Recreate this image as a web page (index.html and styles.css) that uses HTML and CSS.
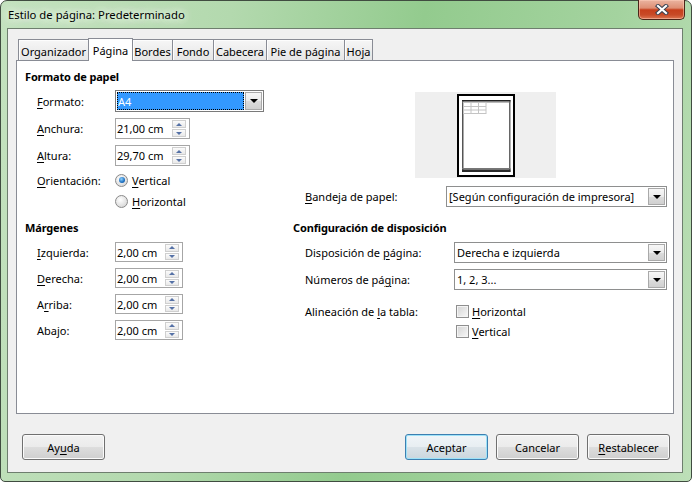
FILE: index.html
```html
<!DOCTYPE html>
<html lang="es">
<head>
<meta charset="utf-8">
<title>Estilo de página: Predeterminado</title>
<link rel="stylesheet" href="styles.css">
</head>
<body>
<div class="window">
  <div class="titlebar">
    <span class="title">Estilo de página: Predeterminado</span>
    <div class="close">
      <svg width="14" height="11" viewBox="0 0 14 11">
        <path d="M3 2 L11 9 M11 2 L3 9" stroke="#3b4150" stroke-width="4.2" stroke-linecap="square" fill="none"/>
        <path d="M3 2 L11 9 M11 2 L3 9" stroke="#ffffff" stroke-width="2.2" stroke-linecap="square" fill="none"/>
      </svg>
    </div>
  </div>
  <div class="client">
    <div class="tabs">
      <div class="tab w-org">Organizador</div>
      <div class="tab active w-pag">Página</div>
      <div class="tab w-bor">Bordes</div>
      <div class="tab w-fon">Fondo</div>
      <div class="tab w-cab">Cabecera</div>
      <div class="tab w-pie">Pie de página</div>
      <div class="tab w-hoj">Hoja</div>
    </div>
    <div class="panel">
      <div class="col-left">
        <div class="heading">Formato de papel</div>
        <div class="row r-formato">
          <span class="lbl"><u>F</u>ormato:</span>
          <div class="select sel-a4">
            <span class="val hl">A4</span>
            <span class="arrow"><i class="tri"></i></span>
          </div>
        </div>
        <div class="row r-field">
          <span class="lbl"><u>A</u>nchura:</span>
          <div class="spin wide"><span class="val">21,00 cm</span><span class="btns"><span class="up"></span><span class="dn"></span></span></div>
        </div>
        <div class="row r-field">
          <span class="lbl"><u>A</u>ltura:</span>
          <div class="spin wide"><span class="val">29,70 cm</span><span class="btns"><span class="up"></span><span class="dn"></span></span></div>
        </div>
        <div class="row r-orient">
          <span class="lbl"><u>O</u>rientación:</span>
          <span class="radio on"></span><span><u>V</u>ertical</span>
        </div>
        <div class="row r-horiz">
          <span class="radio"></span><span><u>H</u>orizontal</span>
        </div>
        <div class="heading h-marg">Márgenes</div>
        <div class="row r-marg">
          <span class="lbl"><u>I</u>zquierda:</span>
          <div class="spin"><span class="val">2,00 cm</span><span class="btns"><span class="up"></span><span class="dn"></span></span></div>
        </div>
        <div class="row r-marg">
          <span class="lbl"><u>D</u>erecha:</span>
          <div class="spin"><span class="val">2,00 cm</span><span class="btns"><span class="up"></span><span class="dn"></span></span></div>
        </div>
        <div class="row r-marg">
          <span class="lbl">A<u>r</u>riba:</span>
          <div class="spin"><span class="val">2,00 cm</span><span class="btns"><span class="up"></span><span class="dn"></span></span></div>
        </div>
        <div class="row r-marg">
          <span class="lbl">Aba<u>j</u>o:</span>
          <div class="spin"><span class="val">2,00 cm</span><span class="btns"><span class="up"></span><span class="dn"></span></span></div>
        </div>
      </div>
      <div class="col-right">
        <div class="preview">
          <svg width="141" height="86" viewBox="0 0 141 86">
            <rect x="0" y="0" width="141" height="86" fill="#efefef"/>
            <rect x="43" y="3" width="56" height="81" fill="#ffffff" stroke="#000" stroke-width="2"/>
            <rect x="47" y="8" width="1.5" height="72" fill="#555"/>
            <rect x="94" y="8" width="1.5" height="72" fill="#666"/>
            <rect x="47" y="8" width="48.5" height="1.5" fill="#222"/>
            <rect x="47" y="9.5" width="48.5" height="1" fill="#777"/>
            <rect x="47" y="76" width="48.5" height="1.5" fill="#777"/>
            <rect x="47" y="77.5" width="48.5" height="2.5" fill="#2a2a2a"/>
            <g stroke="#c4c4c4" stroke-width="1" fill="none">
              <rect x="48.5" y="10.5" width="22.5" height="11"/>
              <line x1="56" y1="10.5" x2="56" y2="21.5"/>
              <line x1="63.5" y1="10.5" x2="63.5" y2="21.5"/>
              <line x1="48.5" y1="14.5" x2="71" y2="14.5"/>
              <line x1="48.5" y1="18" x2="71" y2="18"/>
            </g>
          </svg>
        </div>
        <div class="row r-bandeja">
          <span class="lbl lbl-b"><u>B</u>andeja de papel:</span>
          <div class="select sel-b"><span class="val">[Según configuración de impresora]</span><span class="arrow"><i class="tri"></i></span></div>
        </div>
        <div class="heading h-conf">Configuración de disposición</div>
        <div class="row r-disp">
          <span class="lbl lbl-c">Disposición de <u>p</u>ágina:</span>
          <div class="select sel-c"><span class="val">Derecha e izquierda</span><span class="arrow"><i class="tri"></i></span></div>
        </div>
        <div class="row r-disp">
          <span class="lbl lbl-c">Números de pá<u>g</u>ina:</span>
          <div class="select sel-c"><span class="val">1, 2, 3...</span><span class="arrow"><i class="tri"></i></span></div>
        </div>
        <div class="row r-alin">
          <span class="lbl lbl-d">Alineación de <u>l</u>a tabla:</span>
          <span class="check"></span><span><u>H</u>orizontal</span>
        </div>
        <div class="row r-vert">
          <span class="check"></span><span><u>V</u>ertical</span>
        </div>
      </div>
    </div>
    <div class="buttons">
      <div class="btn">Ay<u>u</u>da</div>
      <div class="btn-group">
        <div class="btn default">Aceptar</div>
        <div class="btn">Cancelar</div>
        <div class="btn"><u>R</u>establecer</div>
      </div>
    </div>
  </div>
</div>
</body>
</html>
```
FILE: styles.css
```css
* { box-sizing: border-box; }
html, body { margin: 0; padding: 0; }
body {
  width: 692px;
  height: 482px;
  overflow: hidden;
  font-family: "Noto Sans", "Liberation Sans", sans-serif;
  font-size: 11px;
  color: #000;
  background: #fff;
}
u { text-decoration: underline; text-underline-offset: 2px; }

.window {
  width: 692px;
  height: 482px;
  border: 1px solid #404c40;
  border-radius: 7px 7px 5px 5px;
  background: linear-gradient(100deg, #c4e2bf 0%, #b3d9ae 30%, #93cb8e 55%, #a4d39f 80%, #bddfb8 100%);
  padding: 0 8px 8px 6px;
  display: flex;
  flex-direction: column;
}

.titlebar {
  height: 27px;
  flex: none;
  display: flex;
  align-items: flex-start;
}
.title {
  padding: 6px 0 0 1px;
  font-size: 11.3px;
  text-shadow: 0 0 6px #eef8ec, 0 0 10px #eef8ec, 0 0 14px #e6f4e3;
}
.close {
  margin-left: auto;
  margin-right: -2px;
  margin-top: -1px;
  width: 47px;
  height: 20px;
  border: 1px solid #4a2418;
  border-top: none;
  border-radius: 0 0 5px 5px;
  background: linear-gradient(#eab4a0 0%, #de8f74 42%, #c63f1c 52%, #c84a27 78%, #dc7652 100%);
  box-shadow: inset 0 0 0 1px rgba(255, 210, 190, 0.5);
  display: flex;
  align-items: center;
  justify-content: center;
}

.client {
  flex: 1;
  background: #f0f0f0;
  border: 1px solid #6e7e6e;
  padding: 0 8px;
  display: flex;
  flex-direction: column;
}

.tabs {
  display: flex;
  align-items: flex-end;
  height: 22px;
  margin-top: 9px;
  padding-left: 2px;
  position: relative;
  z-index: 1;
}
.tab {
  height: 21px;
  border: 1px solid #898c95;
  border-bottom: none;
  margin-left: -1px;
  background: linear-gradient(#f6f6f6, #e6e6e6);
  box-shadow: inset 1px 1px 0 #fdfdfd;
  display: flex;
  align-items: center;
  justify-content: center;
  padding-top: 3px;
  white-space: nowrap;
}
.tab:first-child { margin-left: 0; }
.tab.active {
  height: 23px;
  margin-bottom: -1px;
  background: #fff;
  box-shadow: none;
  padding-top: 1px;
  position: relative;
  z-index: 2;
}
.w-org { width: 71px; }
.w-pag { width: 45px; }
.w-bor { width: 41px; }
.w-fon { width: 42px; }
.w-cab { width: 54px; }
.w-pie { width: 79px; }
.w-hoj { width: 29px; }

.panel {
  height: 354px;
  flex: none;
  background: #fff;
  border: 1px solid #898c95;
  display: flex;
  padding: 8px 0 0 8px;
}
.col-left { width: 268px; display: flex; flex-direction: column; }
.col-right { width: 374px; display: flex; flex-direction: column; }

.heading {
  height: 16px;
  line-height: 16px;
  font-weight: bold;
  letter-spacing: -0.15px;
}
.row { display: flex; align-items: center; white-space: nowrap; }
.lbl { width: 78px; margin-left: 12px; flex: none; }

.r-formato { margin-top: 5px; height: 22px; }
.r-field { margin-top: 6px; height: 21px; }
.r-orient { margin-top: 4px; height: 20px; }
.r-horiz { margin-top: 1px; height: 20px; padding-left: 90px; }
.h-marg { margin-top: 9px; }
.r-marg { margin-top: 6px; height: 20px; }

.preview { margin-top: 23px; margin-left: 122px; height: 86px; }
.preview svg { display: block; }
.r-bandeja { margin-top: 8px; height: 21px; }
.lbl-b { width: 141px; }
.h-conf { margin-top: 13px; }
.r-disp { margin-top: 6px; height: 21px; }
.lbl-c { width: 149px; }
.r-alin { margin-top: 11px; height: 20px; }
.lbl-d { width: 151px; }
.r-vert { height: 20px; padding-left: 163px; }

.select {
  display: flex;
  height: 100%;
  border: 1px solid #8e8f8f;
  background: #fff;
}
.select .val {
  flex: 1;
  padding-left: 2px;
  display: flex;
  align-items: center;
  overflow: hidden;
}
.select .arrow {
  width: 17px;
  margin: 1px;
  border: 1px solid #a9a9a9;
  background: linear-gradient(#f7f7f7 0%, #ebebeb 50%, #dcdcdc 51%, #d0d0d0 100%);
  display: flex;
  align-items: center;
  justify-content: center;
}
.tri {
  width: 0;
  height: 0;
  border-left: 4px solid transparent;
  border-right: 4px solid transparent;
  border-top: 4px solid #000;
}
.sel-a4 { width: 149px; border-color: #7a7a7a; }
.sel-a4 .val.hl {
  margin: 1px 0 1px 1px;
  background: #3399ff;
  color: #fff;
  outline: 1px dotted #000;
  outline-offset: -1px;
  padding-left: 1px;
}
.sel-b { width: 221px; }
.sel-c { width: 213px; }

.spin {
  display: flex;
  width: 68px;
  height: 100%;
  border: 1px solid #a6a6a6;
  background: #fff;
}
.spin.wide { width: 75px; }
.spin .val {
  flex: 1;
  padding-left: 1px;
  display: flex;
  align-items: center;
}
.spin .btns {
  width: 14px;
  margin: 1px 3px 1px 0;
  display: flex;
  flex-direction: column;
  gap: 1px;
}
.spin .btns span {
  flex: 1;
  border: 1px solid #cfcfcf;
  background: linear-gradient(#fbfbfb, #e9e9e9);
  display: flex;
  align-items: center;
  justify-content: center;
}
.spin .btns .up::after {
  content: "";
  border-left: 3px solid transparent;
  border-right: 3px solid transparent;
  border-bottom: 3px solid #5571a6;
}
.spin .btns .dn::after {
  content: "";
  border-left: 3px solid transparent;
  border-right: 3px solid transparent;
  border-top: 3px solid #5571a6;
}

.radio {
  width: 13px;
  height: 13px;
  border-radius: 50%;
  border: 1px solid #8a8a8a;
  background: radial-gradient(circle at 40% 35%, #ffffff 0%, #e4e4e4 55%, #cfcfcf 100%);
  margin-right: 4px;
  flex: none;
  display: flex;
  align-items: center;
  justify-content: center;
}
.radio.on::after {
  content: "";
  width: 6px;
  height: 6px;
  border-radius: 50%;
  background: radial-gradient(circle at 40% 35%, #8fd3ff 0%, #1d6fc0 60%, #0d4f98 100%);
}

.check {
  width: 13px;
  height: 13px;
  border: 1px solid #8f8f8f;
  background: linear-gradient(135deg, #d3d3d3 0%, #e9e9e9 60%, #f8f8f8 100%);
  box-shadow: inset 0 0 0 1px #f4f4f4;
  margin-right: 3px;
  flex: none;
}

.buttons {
  margin-top: 20px;
  display: flex;
  justify-content: space-between;
  padding: 0 4px 0 6px;
}
.btn-group { display: flex; gap: 8px; }
.btn {
  width: 83px;
  height: 26px;
  border: 1px solid #707070;
  border-radius: 3px;
  background: linear-gradient(#f2f2f2 0%, #ebebeb 48%, #dddddd 52%, #cfcfcf 100%);
  box-shadow: inset 0 0 0 1px #fbfbfb;
  display: flex;
  align-items: center;
  justify-content: center;
  white-space: nowrap;
}
.btn.default {
  border-color: #3c7fb1;
  box-shadow: inset 0 0 0 1px #9ee2f8;
  background: linear-gradient(#f0f5f8 0%, #e8eef2 48%, #d9e2e8 52%, #cbd6dd 100%);
}
```
